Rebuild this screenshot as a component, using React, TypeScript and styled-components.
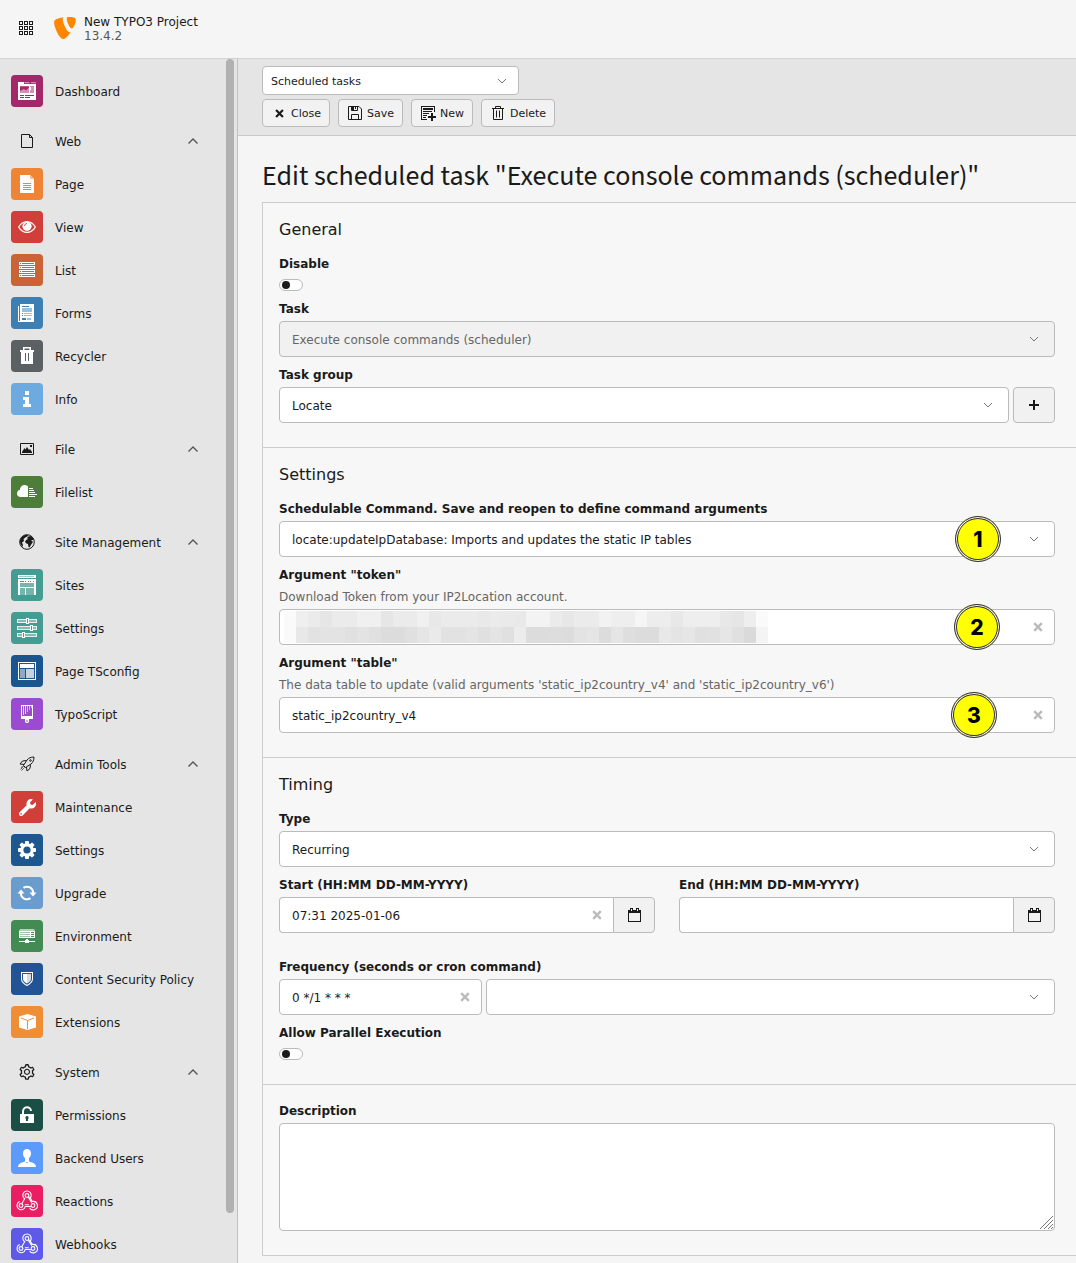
import React, { useState } from "react";
import styled, { createGlobalStyle } from "styled-components";
import { SiTypo3 } from "react-icons/si";
import { FaWrench } from "react-icons/fa";
import { AiOutlineSetting } from "react-icons/ai";

const GlobalStyle = createGlobalStyle`
  *, *::before, *::after { box-sizing: border-box; }
  body {
    margin: 0;
    background: #f5f5f5;
    color: #1a1a1a;
    font: 12px/20px Verdana, "DejaVu Sans", sans-serif;
  }
  button, input, select, textarea { font: inherit; color: inherit; margin: 0; }
  svg { display: block; flex: none; }
`;

/* ---------- shell ---------- */

const Shell = styled.div`
  display: flex;
  flex-direction: column;
  min-height: 100vh;
`;

const Topbar = styled.header`
  display: flex;
  align-items: center;
  height: 59px;
  padding: 0 19px 2px;
  border-bottom: 1px solid #d2d2d2;
`;

const AppsButton = styled.button`
  padding: 0;
  border: 0;
  background: none;
`;

const Brand = styled.a`
  display: flex;
  align-items: center;
  gap: 8px;
  margin-left: 21px;
  color: inherit;
  text-decoration: none;
  line-height: 14px;
`;

const BrandText = styled.span`
  padding-top: 2px;
`;

const Version = styled.span`
  display: block;
  color: #555;
`;

const Body = styled.div`
  display: flex;
  flex: 1;
`;

const Sidebar = styled.aside`
  display: flex;
  flex: 0 0 238px;
  padding-right: 3px;
  background: #e5e5e5;
  border-right: 1px solid #c0c0c0;
`;

const ScrollThumb = styled.div`
  width: 8px;
  margin-bottom: 50px;
  border-radius: 4px;
  background: #b1b1b1;
`;

const Nav = styled.nav`
  display: flex;
  flex-direction: column;
  flex: 1;
  gap: 12px;
  padding: 13px 28px 0 11px;
`;

const NavGroup = styled.div`
  display: flex;
  flex-direction: column;
  gap: 5px;
`;

const NavLink = styled.a`
  display: flex;
  align-items: center;
  gap: 12px;
  height: 38px;
  color: inherit;
  text-decoration: none;
`;

const NavToggle = styled.button`
  display: flex;
  align-items: center;
  gap: 12px;
  height: 38px;
  padding: 0;
  border: 0;
  background: none;
  text-align: left;
`;

const NavText = styled.span`
  flex: 1;
  padding-top: 2px;
`;

const IconSlot = styled.span<{ $width: number }>`
  display: grid;
  place-items: center;
  width: ${(p) => p.$width}px;
`;

const Tile = styled.span<{ $color: string }>`
  display: grid;
  place-items: center;
  width: 32px;
  height: 32px;
  border-radius: 4px;
  background: ${(p) => p.$color};
  color: #fff;
`;

/* ---------- content ---------- */

const Main = styled.main`
  flex: 1;
  min-width: 0;
`;

const DocHeader = styled.div`
  display: flex;
  flex-direction: column;
  gap: 4px;
  padding: 7px 24px 8px;
  background: #e5e5e5;
  border-bottom: 1px solid #c9c9c9;
  font-size: 11px;
`;

const ButtonBar = styled.div`
  display: flex;
  gap: 8px;
`;

const ToolButton = styled.button`
  display: flex;
  align-items: center;
  gap: 4px;
  height: 28px;
  padding: 0 8px;
  border: 1px solid #bbb;
  border-radius: 4px;
  background: #f2f2f2;
`;

const ToolText = styled.span`
  padding-top: 2px;
`;

const Content = styled.div`
  padding: 22px 0 7px 24px;
`;

const Title = styled.h1`
  margin: 0 0 8px;
  font: 400 28px/36px "Source Sans 3", "Noto Sans CJK SC", sans-serif;
`;

const Panel = styled.form`
  border: 1px solid #ccc;
  border-right: 0;
  background: #f7f7f7;
`;

const Section = styled.section`
  display: flex;
  flex-direction: column;
  gap: 8px;
  padding: 16px 21px 24px 16px;

  & + & {
    border-top: 1px solid #ccc;
  }
`;

const SectionTitle = styled.h2`
  margin: 0 0 5px;
  font-size: 16px;
  font-weight: 400;
  line-height: 22px;
`;

const Field = styled.div`
  display: flex;
  flex-direction: column;
  gap: 2px;
`;

const Label = styled.label`
  font-weight: 700;
`;

const Hint = styled.div`
  color: #666;
`;

const Columns = styled.div`
  display: grid;
  grid-template-columns: 1fr 1fr;
  gap: 24px;
  margin-bottom: 16px;
`;

const Row = styled.div`
  display: flex;
  gap: 4px;
`;

const Switch = styled.input`
  appearance: none;
  display: block;
  width: 24px;
  height: 12px;
  margin-top: 3px;
  padding: 1px 2px;
  border: 1px solid #bbb;
  border-radius: 6px;
  background: #fff;

  &::before {
    content: "";
    display: block;
    width: 8px;
    height: 8px;
    border-radius: 4px;
    background: #1a1a1a;
  }

  &:checked::before {
    margin-left: auto;
  }
`;

const SelectWrap = styled.div<{ $compact?: boolean }>`
  display: grid;
  flex: 1;
  align-items: center;
  position: relative;
  width: ${(p) => (p.$compact ? "257px" : "auto")};

  & > select {
    grid-area: 1 / 1;
    appearance: none;
    width: 100%;
    height: ${(p) => (p.$compact ? "29px" : "36px")};
    padding: 2px ${(p) => (p.$compact ? "8px" : "12px")} 0;
    border: 1px solid #bbb;
    border-radius: 4px;
    background: #fff;
  }

  & > select:disabled {
    background: #f1f1f1;
    color: #666;
    opacity: 1;
  }

  & > svg {
    grid-area: 1 / 1;
    justify-self: end;
    margin-right: ${(p) => (p.$compact ? "12px" : "16px")};
    pointer-events: none;
  }
`;

const InputBox = styled.div<{ $width?: string; $joined?: boolean }>`
  display: flex;
  position: relative;
  flex: ${(p) => (p.$width ? `0 0 ${p.$width}` : "1")};
  min-width: 0;
  height: 36px;
  border: 1px solid #bbb;
  border-radius: ${(p) => (p.$joined ? "4px 0 0 4px" : "4px")};
  border-right-width: ${(p) => (p.$joined ? "0" : "1px")};
  background: #fff;
`;

const TextInput = styled.input`
  flex: 1;
  min-width: 0;
  padding: 2px 12px 0;
  border: 0;
  border-radius: 4px;
  background: transparent;
`;

const ClearButton = styled.button`
  display: grid;
  place-items: center;
  width: 32px;
  padding: 0;
  border: 0;
  background: none;
  color: #bbb;
`;

const Group = styled.div`
  display: flex;
`;

const SideButton = styled.button<{ $joined?: boolean }>`
  display: grid;
  place-items: center;
  width: 42px;
  height: 36px;
  padding: 0;
  border: 1px solid #bbb;
  border-radius: ${(p) => (p.$joined ? "0 4px 4px 0" : "4px")};
  background: #f1f1f1;
`;

const Badge = styled.span<{ $right: number }>`
  position: absolute;
  top: 50%;
  right: ${(p) => p.$right}px;
  display: grid;
  place-items: center;
  width: 46px;
  height: 46px;
  margin-top: -23px;
  padding-top: 1px;
  border: 1px solid #333;
  border-radius: 50%;
  background: #ff0;
  box-shadow: inset 0 0 0 1px #fff, inset 0 0 0 2px #333;
  color: #000;
  font: 800 21px/24px Inter, sans-serif;
`;

const Redaction = styled.div`
  position: absolute;
  top: 1px;
  left: 4px;
  display: grid;
  grid-template-columns: repeat(40, 1fr);
  grid-auto-rows: 16px;
  width: 484px;
`;

const Cell = styled.span<{ $shade: string }>`
  background: #${(p) => p.$shade.repeat(3)};
`;

const AreaWrap = styled.div`
  display: flex;
  position: relative;

  & > textarea {
    flex: 1;
    height: 108px;
    padding: 8px 12px;
    border: 1px solid #bbb;
    border-radius: 4px;
    background: #fff;
    resize: none;
  }

  & > svg {
    position: absolute;
    right: 2px;
    bottom: 2px;
  }
`;

/* ---------- small glyphs ---------- */

const ChevronDown = () => (
  <svg width="10" height="10" viewBox="0 0 10 10" fill="none" stroke="#777">
    <path d="M1 3l4 4 4-4" />
  </svg>
);

const ChevronUp = () => (
  <svg width="10" height="10" viewBox="0 0 10 10" fill="none" stroke="#555" strokeWidth="1.4">
    <path d="M.5 7.5L5 3l4.5 4.5" />
  </svg>
);

const Cross = ({ size = 10 }: { size?: number }) => (
  <svg width={size} height={size} viewBox="0 0 10 10" stroke="currentColor" strokeWidth="2.4">
    <path d="M1.2 1.2l7.6 7.6M8.8 1.2L1.2 8.8" />
  </svg>
);

const CalendarIcon = () => (
  <svg width="13" height="14" viewBox="0 0 13 14">
    <path
      fill="#1a1a1a"
      fillRule="evenodd"
      d="M2 0h3v2h3V0h3v2h2v12H0V2h2zM3 1v2h1V1zM9 1v2h1V1zM1 5v8h11V5z"
    />
  </svg>
);

const PlusIcon = () => (
  <svg width="10" height="10" viewBox="0 0 10 10" stroke="#1a1a1a" strokeWidth="2">
    <path d="M5 0v10M0 5h10" />
  </svg>
);

const AppsIcon = () => (
  <svg width="14" height="14" viewBox="0 0 14 14" fill="none" stroke="#1a1a1a">
    {[0.5, 5.5, 10.5].map((y) =>
      [0.5, 5.5, 10.5].map((x) => <rect key={`${x}-${y}`} x={x} y={y} width="3" height="3" />)
    )}
  </svg>
);

const SaveIcon = () => (
  <svg width="16" height="16" viewBox="0 0 16 16" fill="none" stroke="#1a1a1a">
    <path d="M1.5 1.5H12L14.5 4v10.5h-13zM4.5 14.5v-5h7v5" />
    <path d="M4.5 2v3.5h6V2" />
    <path fill="#1a1a1a" stroke="none" d="M4 1h3v4H4zM8 2h1v2H8z" />
  </svg>
);

const NewIcon = () => (
  <svg width="16" height="16" viewBox="0 0 16 16" fill="#1a1a1a">
    <path d="M1 1h14v6h-1V2H2v12h5v1H1z" />
    <path d="M3 3h10v2H3zM3 6h9v1H3zM3 8h6v1H3zM3 10h4v1H3zM3 12h3v1H3z" />
    <path d="M11 8h2v3h3v2h-3v3h-2v-3H8v-2h3z" />
  </svg>
);

const TrashIcon = () => (
  <svg width="14" height="16" viewBox="0 0 14 16" fill="none" stroke="#1a1a1a">
    <path d="M1 3.5h12M4.5 3.5v-2h5v2M2.500 3.500v11h9v-11M5.500 5.500v7M8.500 5.500v7" />
  </svg>
);

const Glyph = ({ children }: { children: React.ReactNode }) => (
  <svg width="32" height="32" viewBox="0 0 32 32" fill="#fff">
    {children}
  </svg>
);

/* ---------- module glyphs ---------- */

const glyphs: Record<string, React.ReactNode> = {
  dashboard: (
    <Glyph>
      <path d="M7 7h6v2h12v16H7z" />
      <path d="M13.5 7.3h5v1h-5zM20 7.3h5v1h-5z" opacity=".6" />
      <path fill="#d391b5" d="M9 11h9v7H9zM19 11h4v7h-4z" />
      <path fill="#a4276a" d="M9 11.5h9v1l-3 3-2-1.5-4 2z" />
      <path d="M19 12h1v3h-1z" />
      <path fill="#a4276a" d="M9 20h4v1H9zM14 20h9v1h-9zM9 22h4v1H9zM14 22h5v1h-5z" />
    </Glyph>
  ),
  page: (
    <Glyph>
      <path d="M9 7h10l4 4v14H9z" />
      <path fill="#f6bd90" d="M19 7v4h4z" />
      <path fill="#ef8534" d="M12 15h8v1h-8zM12 17h8v1h-8zM12 19h8v1h-8zM12 21h8v1h-8z" />
    </Glyph>
  ),
  view: (
    <Glyph>
      <path
        fillRule="evenodd"
        d="M7 16c2-4 5.500-6 9-6s7 2 9 6c-2 4-5.500 6-9 6s-7-2-9-6zm1.300 0c1.700 3.200 4.700 4.800 7.700 4.800s6-1.600 7.700-4.800c-1.700-3.200-4.700-4.800-7.700-4.800S10 12.800 8.300 16z"
      />
      <circle cx="16" cy="15.3" r="4.6" />
      <path d="M13.500 15a2.500 2.500 0 012.500-2.500" fill="none" stroke="#d13f3a" strokeWidth=".9" />
    </Glyph>
  ),
  list: (
    <Glyph>
      {[8, 12, 16, 20].map((y) => (
        <g key={y}>
          <rect x="8" y={y} width="16" height="3" />
          <path fill="#ca6435" d={`M9 ${y + 1}h1v1H9zM11 ${y + 1}h12v1H11z`} />
        </g>
      ))}
    </Glyph>
  ),
  forms: (
    <Glyph>
      <path d="M7 9h1v15h1v1H7zM9 7h14v18H9z" />
      <path fill="#3d7fb3" d="M11 9h7v1h-7zM11 16h1v1h-1zM11 18h1v1h-1zM11 21h4v2h-4z" />
      <path fill="#9ebfd9" d="M11 11h10v4H11zM13 16h8v1h-8zM13 18h8v1h-8zM16 21h4v2h-4z" />
    </Glyph>
  ),
  recycler: (
    <Glyph>
      <path
        fillRule="evenodd"
        d="M12 7h8v3h3v2h-1v12H10V12H9v-2h3zM13.500 8.500V10h5V8.500zM14 13v8h1v-8zM17 13v8h1v-8z"
      />
    </Glyph>
  ),
  info: (
    <Glyph>
      <path d="M14 8h4v4h-4zM12 14h6v7h2v3h-8v-3h2v-4h-2z" />
    </Glyph>
  ),
  filelist: (
    <Glyph>
      <path d="M17 21H9.500C7.500 21 6 19.500 6 17.500c0-1.800 1.200-3.200 2.800-3.400C9 11 11 9 13.500 9c1.400 0 2.600.5 3.500 1.500z" />
      <path d="M18 12h4v1h-4zM18 14h5v1h-5zM18 16h6v1h-6zM18 18h8v1h-8zM18 20h6v1h-6z" />
    </Glyph>
  ),
  sites: (
    <Glyph>
      <path d="M7 6h18v3H7zM7 10h18v16H7z" />
      <path fill="#459c92" d="M8 7h15v.6H8zM9 12h4v1H9zM14 12h1v1h-1zM17 12h1v1h-1zM19 12h1v1h-1zM22 12h1v1h-1z" />
      <path fill="#74b5ad" d="M9 14h14v4H9zM9 19h5v7H9zM15 19h8v7h-8z" />
    </Glyph>
  ),
  sliders: (
    <Glyph>
      {[
        [9, 15],
        [16, 19],
        [23, 11],
      ].map(([y, x]) => (
        <g key={y} stroke="#fff">
          <rect x="6.5" y={y - 1.5} width="19" height="3" fill="#8cc3bc" opacity=".85" />
          <rect x={x + 0.5} y={y - 2.5} width="2" height="5" fill="#459c92" />
        </g>
      ))}
    </Glyph>
  ),
  tsconfig: (
    <Glyph>
      <rect x="7.5" y="7.5" width="17" height="17" fill="none" stroke="#fff" />
      <path d="M9 9h14v4H9z" />
      <path d="M9 14h5v9H9z" opacity=".5" />
      <path d="M15 14h8v9h-8z" opacity=".75" />
    </Glyph>
  ),
  typoscript: (
    <Glyph>
      <path fillRule="evenodd" d="M10 7h12v14h-4v3l-1 1h-2l-1-1v-3h-4zM11 8v10h10V8zM15.500 22v2h1v-2z" />
      <path d="M12 8h1v9h-1zM14 8h1v8h-1z" opacity=".8" />
      <path d="M16 8h1v6h-1zM18 8h1v4h-1zM20 8h1v2h-1z" opacity=".6" />
    </Glyph>
  ),
  maintenance: <FaWrench size={17} />,
  cog: (
    <Glyph>
      {[0, 45, 90, 135].map((a) => (
        <rect key={a} x="14" y="7" width="4" height="18" rx="1" transform={`rotate(${a} 16 16)`} />
      ))}
      <circle cx="16" cy="16" r="6.8" />
      <circle cx="16" cy="16" r="3.6" fill="#1c588f" />
    </Glyph>
  ),
  upgrade: (
    <Glyph>
      <path
        fill="none"
        stroke="#fff"
        strokeWidth="2"
        d="M12.500 10.800A6.200 6.200 0 0122.200 16M19.500 21.200A6.200 6.200 0 019.800 16"
      />
      <path d="M18.500 15.500h7L22 19.500zM6.500 16.500h7L10 12.500z" />
    </Glyph>
  ),
  environment: (
    <Glyph>
      <path d="M9 9h14l1 2H8z" opacity=".6" />
      <path d="M8 11h16v7H8z" />
      <path fill="#448a53" d="M20 12h3v1h-3zM20 14h3v1h-3zM20 16h3v1h-3z" />
      <path fill="#a1c4a9" d="M9 12h10v1H9zM9 14h10v1H9zM9 16h10v1H9z" />
      <path d="M15 19h2v1h1v1h6v1h-6v1h-4v-1H8v-1h6v-1h1z" />
    </Glyph>
  ),
  shield: (
    <Glyph>
      <path
        fillRule="evenodd"
        d="M10 9h12v7c0 3-3 5.500-6 7-3-1.500-6-4-6-7zm1 1v6c0 2.500 2.500 4.500 5 5.800 2.500-1.300 5-3.300 5-5.800v-6z"
      />
      <path d="M12 11h4v9.600c-2-1.200-4-2.600-4-4.600z" />
      <path d="M16 11h4v5c0 2-2 3.400-4 4.600z" opacity=".8" />
    </Glyph>
  ),
  extension: (
    <Glyph>
      <path d="M16.500 8l8.500 2.500v11L16.500 24 8 21.500v-11z" />
      <path d="M10 12l6.500 2.500L23 12M16.500 14.500V23" fill="none" stroke="#f08e36" />
    </Glyph>
  ),
  lock: (
    <Glyph>
      <path d="M12 15v-2.500a4 4 0 018-.5" fill="none" stroke="#fff" strokeWidth="2" />
      <path fillRule="evenodd" d="M9 15h14v9H9zM16 17a1.700 1.700 0 00-1 3v2h2v-2a1.700 1.700 0 00-1-3z" />
    </Glyph>
  ),
  user: (
    <Glyph>
      <path d="M16 7c2.500 0 4 1.500 4 4.500 0 2-.8 3.600-2 4.600v3.400c2 .8 7 1.500 7 5.500H7c0-4 5-4.700 7-5.500v-3.400c-1.200-1-2-2.600-2-4.600C12 8.500 13.500 7 16 7z" />
      <path d="M14 20h4l-2 1.500z" fill="#5b9bfb" opacity=".6" />
    </Glyph>
  ),
  webhook: (
    <Glyph>
      <g fill="none" stroke="#fff" strokeWidth="1.1">
        <path d="M18.500 13.600A4.200 4.200 0 1013.700 13.700l-2.700 4.600" />
        <path d="M17.200 12.200l3.600 5.400M18.400 11.800l3 4.700a4.200 4.200 0 11-2.800 6.200" />
        <path d="M8.800 16.600a4.200 4.200 0 105.500 4.900h5.500M13.800 19.800h4" />
        <circle cx="16" cy="10.5" r="1.9" />
        <circle cx="10" cy="20.5" r="1.9" />
        <circle cx="22" cy="20.5" r="1.9" />
      </g>
    </Glyph>
  ),
};

const groupGlyphs: Record<string, React.ReactNode> = {
  web: (
    <svg width="16" height="16" viewBox="0 0 16 16" fill="none" stroke="#1a1a1a">
      <path d="M2.500 1.500h8l3 3v10h-11zM10.500 1.500v3h3" />
    </svg>
  ),
  file: (
    <svg width="16" height="16" viewBox="0 0 16 16">
      <path fill="none" stroke="#1a1a1a" d="M1.500 2.500h13v11h-13z" />
      <path fill="#1a1a1a" d="M3 12V11l2.500-4 1 1.500L8 6l2 3 1-1 2 3v1zM11 4h2v2h-2z" />
    </svg>
  ),
  site: (
    <svg width="16" height="16" viewBox="0 0 16 16">
      <circle cx="8" cy="8" r="7.3" fill="#e5e5e5" stroke="#1a1a1a" />
      <path
        fill="#1a1a1a"
        d="M6 1L3 3 .8 6.500 1.500 10l2 3 .5-2-1-2.500 2-1.500-.5-2L7 3l1.500-.5L9 1zM9.500 2.500L8 4l1 1-2 1-1 2 1.500 1.500 1.500.5.5 3 1 .5 2-3.500 1.500-2-2-2h2.500L15 7l-1-3-2.500-2z"
      />
    </svg>
  ),
  rocket: (
    <svg width="16" height="16" viewBox="0 0 16 16" fill="none" stroke="#1a1a1a">
      <path d="M15 1c-3 0-5.500 1-7 3L4.500 9.500l2 2L12 8c2-1.500 3-4 3-7z" />
      <path d="M7.500 4.500L3.500 5 1 8l4 .5M11.500 8.500l-.5 4L8 15l-.5-4" />
      <circle cx="11.5" cy="4.5" r=".8" />
      <path d="M4.500 10.500L1 14M5.500 11.500L2.500 14.500M3.500 10.500l-2 1.500" strokeDasharray="1.5 1" />
    </svg>
  ),
  system: <AiOutlineSetting size={18} />,
};

/* ---------- data ---------- */

type Item = [name: string, color: string, glyph: string];

const modules: { title?: string; icon?: string; items: Item[] }[] = [
  { items: [["Dashboard", "#a4276a", "dashboard"]] },
  {
    title: "Web",
    icon: "web",
    items: [
      ["Page", "#ef8534", "page"],
      ["View", "#d13f3a", "view"],
      ["List", "#ca6435", "list"],
      ["Forms", "#3d7fb3", "forms"],
      ["Recycler", "#5b6163", "recycler"],
      ["Info", "#6daae0", "info"],
    ],
  },
  { title: "File", icon: "file", items: [["Filelist", "#4c7e3a", "filelist"]] },
  {
    title: "Site Management",
    icon: "site",
    items: [
      ["Sites", "#459c92", "sites"],
      ["Settings", "#459c92", "sliders"],
      ["Page TSconfig", "#1b558f", "tsconfig"],
      ["TypoScript", "#9a4bcf", "typoscript"],
    ],
  },
  {
    title: "Admin Tools",
    icon: "rocket",
    items: [
      ["Maintenance", "#d13f3a", "maintenance"],
      ["Settings", "#1c588f", "cog"],
      ["Upgrade", "#6b9cce", "upgrade"],
      ["Environment", "#448a53", "environment"],
      ["Content Security Policy", "#225395", "shield"],
      ["Extensions", "#f08e36", "extension"],
    ],
  },
  {
    title: "System",
    icon: "system",
    items: [
      ["Permissions", "#1b4f45", "lock"],
      ["Backend Users", "#5b9bfb", "user"],
      ["Reactions", "#ea1f63", "webhook"],
      ["Webhooks", "#5f59e8", "webhook"],
    ],
  },
];

const shades =
  "fa ef eb e6 eb eb f0 f0 e6 eb eb f0 e8 eb eb eb e9 eb ea e9 f3 f3 eb e7 eb eb f2 ee ee f5 ed ed e8 ee ee ee e8 e6 ee fa " +
  "fa e8 e2 e3 e3 e0 e3 e0 dc dc e0 e5 ea e2 e2 e4 e0 e4 e0 ec dc dc dd dc e3 e5 dc e5 de dc dc e8 e4 e6 e0 e1 e6 e0 da f4";

/* ---------- form parts ---------- */

function Select(props: {
  id?: string;
  value: string;
  label?: string;
  disabled?: boolean;
  compact?: boolean;
  children?: React.ReactNode;
}) {
  return (
    <SelectWrap $compact={props.compact}>
      <select id={props.id} aria-label={props.label} disabled={props.disabled} defaultValue={props.value}>
        <option value={props.value}>{props.value}</option>
      </select>
      <ChevronDown />
      {props.children}
    </SelectWrap>
  );
}

function ClearableInput(props: {
  id: string;
  value: string;
  clearable?: boolean;
  width?: string;
  joined?: boolean;
  children?: React.ReactNode;
}) {
  const [value, setValue] = useState(props.value);
  return (
    <InputBox $width={props.width} $joined={props.joined}>
      <TextInput id={props.id} type="text" value={value} onChange={(e) => setValue(e.target.value)} />
      {props.clearable && (
        <ClearButton type="button" aria-label="Clear input" onClick={() => setValue("")}>
          <Cross />
        </ClearButton>
      )}
      {props.children}
    </InputBox>
  );
}

function DateField({ id, label, value }: { id: string; label: string; value: string }) {
  return (
    <Field>
      <Label htmlFor={id}>{label}</Label>
      <Group>
        <ClearableInput id={id} value={value} clearable={value !== ""} joined />
        <SideButton type="button" $joined aria-label="Open calendar">
          <CalendarIcon />
        </SideButton>
      </Group>
    </Field>
  );
}

function Tool({ icon, text }: { icon: React.ReactNode; text: string }) {
  return (
    <ToolButton type="button">
      <IconSlot $width={16}>{icon}</IconSlot>
      <ToolText>{text}</ToolText>
    </ToolButton>
  );
}

/* ---------- page ---------- */

export default function App() {
  return (
    <Shell>
      <GlobalStyle />
      <Topbar>
        <AppsButton type="button" aria-label="Toggle module menu">
          <AppsIcon />
        </AppsButton>
        <Brand href="#">
          <SiTypo3 size={22} color="#ff8700" />
          <BrandText>
            New TYPO3 Project
            <Version>13.4.2</Version>
          </BrandText>
        </Brand>
      </Topbar>
      <Body>
        <Sidebar>
          <Nav aria-label="Modules">
            {modules.map((group, i) => (
              <NavGroup key={i}>
                {group.title && (
                  <NavToggle type="button" aria-expanded="true">
                    <IconSlot $width={32}>{groupGlyphs[group.icon!]}</IconSlot>
                    <NavText>{group.title}</NavText>
                    <ChevronUp />
                  </NavToggle>
                )}
                {group.items.map(([name, color, glyph]) => (
                  <NavLink key={name} href="#">
                    <Tile $color={color}>{glyphs[glyph]}</Tile>
                    <NavText>{name}</NavText>
                  </NavLink>
                ))}
              </NavGroup>
            ))}
          </Nav>
          <ScrollThumb />
        </Sidebar>
        <Main>
          <DocHeader>
            <Select compact label="Module action" value="Scheduled tasks" />
            <ButtonBar>
              <Tool icon={<Cross size={9} />} text="Close" />
              <Tool icon={<SaveIcon />} text="Save" />
              <Tool icon={<NewIcon />} text="New" />
              <Tool icon={<TrashIcon />} text="Delete" />
            </ButtonBar>
          </DocHeader>
          <Content>
            <Title>Edit scheduled task "Execute console commands (scheduler)"</Title>
            <Panel>
              <Section>
                <SectionTitle>General</SectionTitle>
                <Field>
                  <Label htmlFor="disable">Disable</Label>
                  <Switch id="disable" type="checkbox" />
                </Field>
                <Field>
                  <Label htmlFor="task">Task</Label>
                  <Select id="task" disabled value="Execute console commands (scheduler)" />
                </Field>
                <Field>
                  <Label htmlFor="group">Task group</Label>
                  <Row>
                    <Select id="group" value="Locate" />
                    <SideButton type="button" aria-label="Add task group">
                      <PlusIcon />
                    </SideButton>
                  </Row>
                </Field>
              </Section>
              <Section>
                <SectionTitle>Settings</SectionTitle>
                <Field>
                  <Label htmlFor="command">
                    Schedulable Command. Save and reopen to define command arguments
                  </Label>
                  <Select
                    id="command"
                    value="locate:updateIpDatabase: Imports and updates the static IP tables"
                  >
                    <Badge $right={54}>1</Badge>
                  </Select>
                </Field>
                <Field>
                  <Label htmlFor="token">Argument "token"</Label>
                  <Hint>Download Token from your IP2Location account.</Hint>
                  <Row>
                    <ClearableInput id="token" value="" clearable>
                      <Redaction>
                        {shades.split(" ").map((s, i) => (
                          <Cell key={i} $shade={s} />
                        ))}
                      </Redaction>
                      <Badge $right={54}>2</Badge>
                    </ClearableInput>
                  </Row>
                </Field>
                <Field>
                  <Label htmlFor="table">Argument "table"</Label>
                  <Hint>
                    The data table to update (valid arguments 'static_ip2country_v4' and
                    'static_ip2country_v6')
                  </Hint>
                  <Row>
                    <ClearableInput id="table" value="static_ip2country_v4" clearable>
                      <Badge $right={57}>3</Badge>
                    </ClearableInput>
                  </Row>
                </Field>
              </Section>
              <Section>
                <SectionTitle>Timing</SectionTitle>
                <Field>
                  <Label htmlFor="type">Type</Label>
                  <Select id="type" value="Recurring" />
                </Field>
                <Columns>
                  <DateField id="start" label="Start (HH:MM DD-MM-YYYY)" value="07:31 2025-01-06" />
                  <DateField id="end" label="End (HH:MM DD-MM-YYYY)" value="" />
                </Columns>
                <Field>
                  <Label htmlFor="frequency">Frequency (seconds or cron command)</Label>
                  <Row>
                    <ClearableInput id="frequency" value="0 */1 * * *" clearable width="203px" />
                    <Select value="" label="Frequency presets" />
                  </Row>
                </Field>
                <Field>
                  <Label htmlFor="parallel">Allow Parallel Execution</Label>
                  <Switch id="parallel" type="checkbox" />
                </Field>
              </Section>
              <Section>
                <Field>
                  <Label htmlFor="description">Description</Label>
                  <AreaWrap>
                    <textarea id="description" />
                    <svg width="13" height="13" viewBox="0 0 13 13" stroke="#777">
                      <path d="M0 13L13 0M4 13l9-9M8 13l5-5M11 13l2-2" />
                    </svg>
                  </AreaWrap>
                </Field>
              </Section>
            </Panel>
          </Content>
        </Main>
      </Body>
    </Shell>
  );
}
